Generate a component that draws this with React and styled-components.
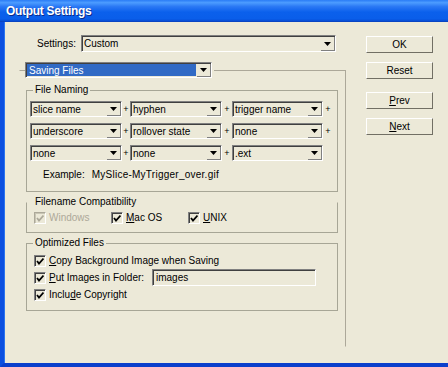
import React from 'react';
import styled, { createGlobalStyle } from 'styled-components';

const GlobalStyle = createGlobalStyle`
  html, body {
    margin: 0;
    padding: 0;
    background: #ece9d8;
  }
  body {
    font-family: 'Liberation Sans', Arial, sans-serif;
    font-size: 10px;
    color: #000;
  }
`;

const Window = styled.div`
  width: 448px;
  height: 367px;
  display: flex;
  flex-direction: column;
  background: #ece9d8;
  overflow: hidden;
`;

const TitleBar = styled.div`
  height: 22px;
  flex: none;
  display: flex;
  align-items: center;
  padding-left: 6px;
  background: linear-gradient(
    to bottom,
    #2a7cf6 0%,
    #4c9cff 12%,
    #2a78f4 30%,
    #0b60ec 55%,
    #0a5eea 85%,
    #064ed6 95%,
    #0a3bb4 100%
  );
`;

const Title = styled.span`
  color: #fff;
  font-weight: bold;
  font-size: 12px;
  letter-spacing: -0.3px;
  text-shadow: 1px 1px 0 #0c2a8a;
`;

const Frame = styled.div`
  flex: 1;
  display: flex;
  border-left: 4px solid #0b4fe0;
  border-bottom: 4px solid #0a3fcc;
  box-shadow: inset 1px 0 0 #2a74f0;
`;

const Main = styled.div`
  width: 362px;
  flex: none;
  display: flex;
  flex-direction: column;
`;

const SettingsRow = styled.div`
  display: flex;
  align-items: center;
  gap: 5px;
  height: 17px;
  margin: 13px 0 0 33px;
`;

const Label = styled.span`
  white-space: nowrap;
  color: ${({ $disabled }) => ($disabled ? '#aca899' : '#000')};
`;

const Field = styled.div`
  display: flex;
  box-sizing: border-box;
  width: ${({ $width }) => $width}px;
  height: ${({ $height }) => $height || 16}px;
  border: 1px solid;
  border-color: #808080 #fff #fff #808080;
  box-shadow: inset 1px 1px 0 #404040;
  background: #ece9d8;
`;

const FieldText = styled.span`
  flex: 1;
  display: flex;
  align-items: center;
  margin: 1px;
  padding-left: ${({ $highlight }) => ($highlight ? 2 : 1)}px;
  white-space: nowrap;
  overflow: hidden;
  background: ${({ $highlight }) => ($highlight ? '#316ac5' : 'transparent')};
  color: ${({ $highlight }) => ($highlight ? '#fff' : '#000')};
`;

const ArrowButton = styled.span`
  width: 14px;
  flex: none;
  box-sizing: border-box;
  display: flex;
  align-items: center;
  justify-content: center;
  margin-top: 1px;
  border-right: 1px solid #808080;
  border-bottom: 1px solid #808080;
`;

const Arrow = () => (
  <svg width="7" height="4" viewBox="0 0 7 4">
    <polygon points="0,0 7,0 3.5,4" fill="#000" />
  </svg>
);

const Select = ({ width, height, value, highlight }) => (
  <Field $width={width} $height={height}>
    <FieldText $highlight={highlight}>{value}</FieldText>
    <ArrowButton>
      <Arrow />
    </ArrowButton>
  </Field>
);

const Panel = styled.fieldset`
  margin: 10px 0 0 15px;
  width: 327px;
  height: 285px;
  box-sizing: border-box;
  padding: 0 7px 0 6px;
  border: 1px solid;
  border-color: #aca899 #aca899 transparent transparent;
  min-width: 0;
`;

const PanelLegend = styled.legend`
  padding: 0 2px 0 0;
  margin-left: -1px;
`;

const Group = styled.fieldset`
  margin: ${({ $top }) => $top}px 0 0;
  padding: ${({ $pad }) => $pad};
  border: 1px solid #a7a696;
  border-top-color: ${({ $noTop }) => ($noTop ? 'transparent' : '#a7a696')};
  min-width: 0;
`;

const GroupLegend = styled.legend`
  padding: 0 2px;
  margin-left: 6px;
  line-height: 12px;
  height: 12px;
`;

const NameGrid = styled.div`
  display: grid;
  grid-template-columns: 92px 8px 92px 10px 91px 10px;
  grid-auto-rows: 16px;
  row-gap: 6px;
  padding-left: 3px;
`;

const Plus = styled.span`
  display: flex;
  align-items: center;
  justify-content: center;
  font-size: 9px;
`;

const ExampleRow = styled.div`
  display: flex;
  align-items: center;
  gap: 7px;
  height: 12px;
  margin: 7px 0 0 16px;
`;

const ExampleValue = styled.span`
  letter-spacing: 0.25px;
`;

const CheckRow = styled.div`
  display: flex;
  align-items: center;
  height: 13px;
  padding-left: 7px;
`;

const CheckItem = styled.label`
  display: flex;
  align-items: center;
  gap: 3px;
  width: ${({ $width }) => ($width ? `${$width}px` : 'auto')};
  height: 13px;
`;

const Box = styled.span`
  width: 12px;
  height: 12px;
  box-sizing: border-box;
  flex: none;
  display: flex;
  align-items: center;
  justify-content: center;
  border: 1px solid;
  border-color: ${({ $disabled }) =>
    $disabled ? '#aca899 #fff #fff #aca899' : '#808080 #fff #fff #808080'};
  box-shadow: inset 1px 1px 0
    ${({ $disabled }) => ($disabled ? '#c8c5b4' : '#404040')};
`;

const Checkbox = ({ label, disabled, width }) => (
  <CheckItem $width={width}>
    <Box $disabled={disabled}>
      <svg width="8" height="8" viewBox="0 0 8 8">
        <polyline
          points="1,4 3,6.5 7.5,1.5"
          fill="none"
          stroke={disabled ? '#aca899' : '#000'}
          strokeWidth="1.8"
        />
      </svg>
    </Box>
    <Label $disabled={disabled}>{label}</Label>
  </CheckItem>
);

const OptionList = styled.div`
  display: flex;
  flex-direction: column;
  padding-left: 7px;
`;

const OptionRow = styled.div`
  display: flex;
  align-items: center;
  height: 17px;
`;

const TextBox = styled.div`
  box-sizing: border-box;
  width: 164px;
  height: 17px;
  display: flex;
  align-items: center;
  padding-left: 3px;
  border: 1px solid;
  border-color: #808080 #fff #fff #808080;
  box-shadow: inset 1px 1px 0 #404040;
`;

const ButtonColumn = styled.div`
  display: flex;
  flex-direction: column;
  padding-top: 14px;
`;

const Button = styled.button`
  width: 67px;
  height: 17px;
  margin-top: ${({ $gap }) => $gap || 0}px;
  padding: 0;
  box-sizing: border-box;
  background: #ece9d8;
  border: 1px solid;
  border-color: #fff #716f64 #716f64 #fff;
  font-family: inherit;
  font-size: 10px;
  color: #000;
`;

const namingRows = [
  ['slice name', 'hyphen', 'trigger name', true],
  ['underscore', 'rollover state', 'none', true],
  ['none', 'none', '.ext', false],
];

const App = () => (
  <>
    <GlobalStyle />
    <Window>
      <TitleBar>
        <Title>Output Settings</Title>
      </TitleBar>
      <Frame>
        <Main>
          <SettingsRow>
            <Label>Settings:</Label>
            <Select width={255} height={17} value="Custom" />
          </SettingsRow>
          <Panel>
            <PanelLegend>
              <Select width={187} value="Saving Files" highlight />
            </PanelLegend>
            <Group $top={6} $pad="5px 0 11px 0">
              <GroupLegend>File Naming</GroupLegend>
              <NameGrid>
                {namingRows.map(([a, b, c, tail]) => (
                  <React.Fragment key={a + b + c}>
                    <Select width={92} value={a} />
                    <Plus>+</Plus>
                    <Select width={92} value={b} />
                    <Plus>+</Plus>
                    <Select width={91} value={c} />
                    <Plus>{tail ? '+' : ''}</Plus>
                  </React.Fragment>
                ))}
              </NameGrid>
              <ExampleRow>
                <Label>Example:</Label>
                <ExampleValue>MySlice-MyTrigger_over.gif</ExampleValue>
              </ExampleRow>
            </Group>
            <Group $top={4} $pad="3px 0 8px 0" $noTop>
              <GroupLegend>Filename Compatibility</GroupLegend>
              <CheckRow>
                <Checkbox width={77} label="Windows" disabled />
                <Checkbox width={77} label={<><u>M</u>ac OS</>} />
                <Checkbox label={<><u>U</u>NIX</>} />
              </CheckRow>
            </Group>
            <Group $top={4} $pad="3px 0 7px 0">
              <GroupLegend>Optimized Files</GroupLegend>
              <OptionList>
                <OptionRow>
                  <Checkbox label={<><u>C</u>opy Background Image when Saving</>} />
                </OptionRow>
                <OptionRow>
                  <Checkbox width={118} label={<><u>P</u>ut Images in Folder:</>} />
                  <TextBox>images</TextBox>
                </OptionRow>
                <OptionRow>
                  <Checkbox label={<>Inclu<u>d</u>e Copyright</>} />
                </OptionRow>
              </OptionList>
            </Group>
          </Panel>
        </Main>
        <ButtonColumn>
          <Button>OK</Button>
          <Button $gap={9}>Reset</Button>
          <Button $gap={13}><u>P</u>rev</Button>
          <Button $gap={9}><u>N</u>ext</Button>
        </ButtonColumn>
      </Frame>
    </Window>
  </>
);

export default App;
